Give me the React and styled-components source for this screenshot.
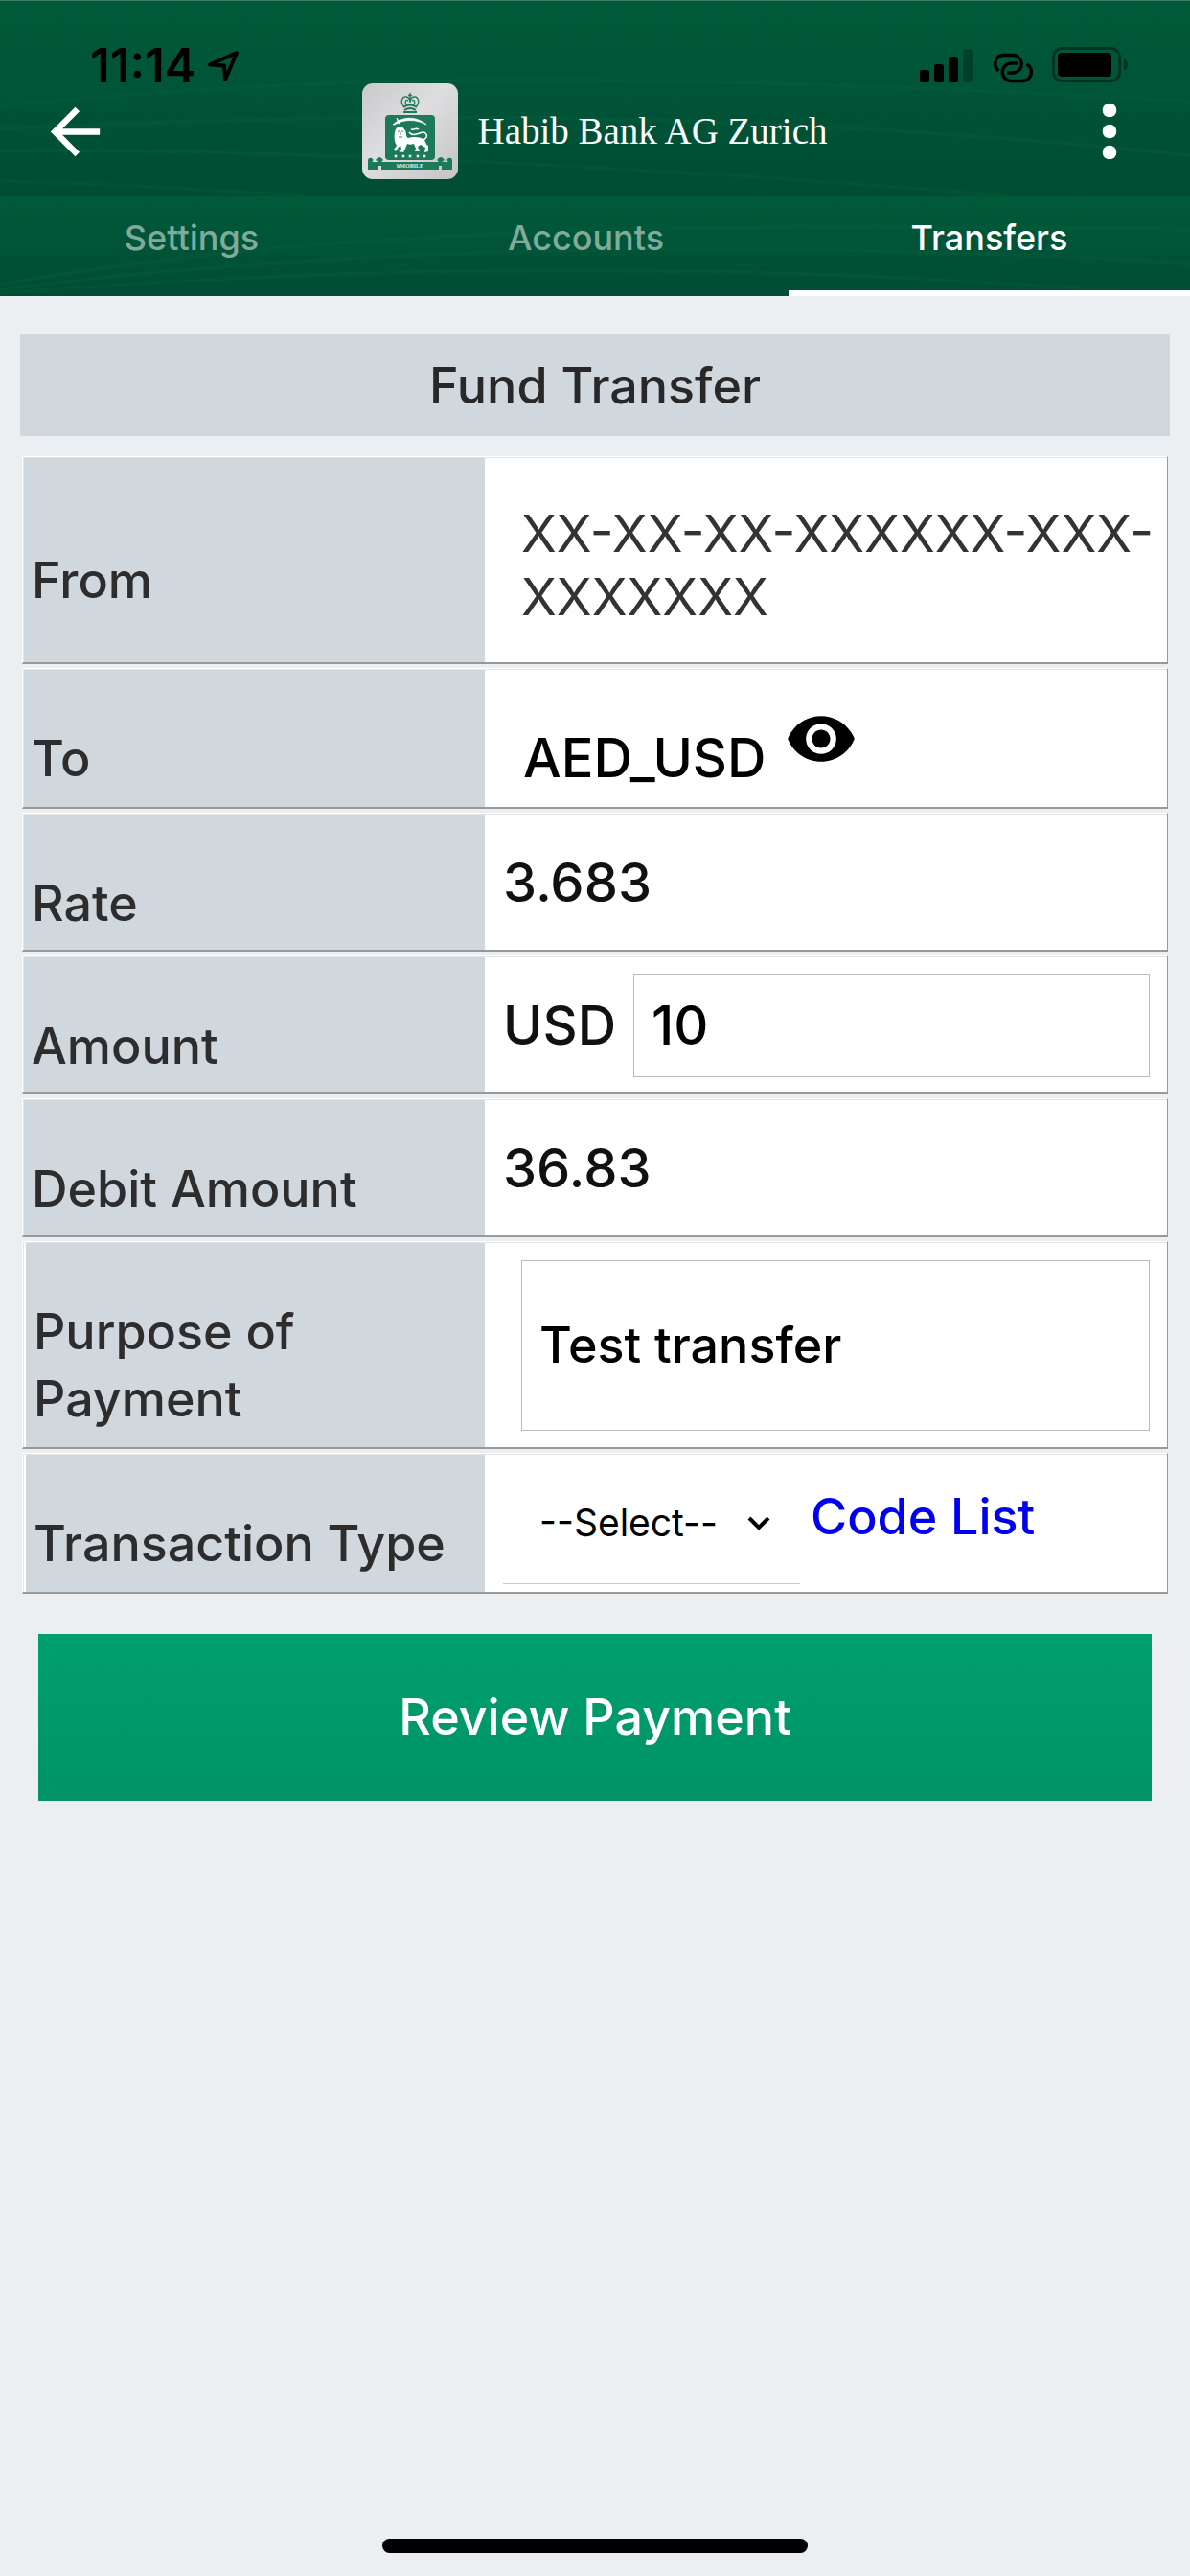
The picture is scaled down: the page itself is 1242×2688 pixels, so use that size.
import { useState } from 'react';
import styled, { createGlobalStyle } from 'styled-components';

const GlobalStyle = createGlobalStyle`
  * {
    box-sizing:border-box;
  }
  body {
    margin:0;
    background:#ebeff2;
    color:#2d2d2d;
    font-family:Inter, "Liberation Sans", sans-serif;
    font-size:52px;
    font-weight:500;
    line-height:70px;
  }
  button, input, select {
    margin:0;
    border:0;
    border-radius:0;
    background:none;
    color:inherit;
    font:inherit;
  }
  svg {
    display:block;
  }
`;

const Page = styled.div`
  display:flex;
  flex-direction:column;
  min-height:100vh;
`;

const Header = styled.header`
  position:relative;
  padding-bottom:17px;
  border-top:1px solid #3b7d63;
  background:linear-gradient(#005a3a, #004d33);
`;

const Waves = styled.svg`
  position:absolute;
  inset:0;
  width:100%;
  height:100%;
  fill:none;
  stroke:#0b6a47;
  stroke-opacity:.2;
  stroke-width:4;
`;

const StatusBar = styled.div`
  position:relative;
  display:flex;
  justify-content:space-between;
  align-items:flex-end;
  height:86px;
  padding:0 64px 0 94px;
  color:#000;
`;

const Clock = styled.div`
  display:flex;
  align-items:center;
  gap:12px;
  font-size:49px;
  font-weight:600;
  line-height:36px;
`;

const StatusIcons = styled.div`
  display:flex;
  align-items:flex-end;
  gap:20px;
`;

const AppBar = styled.div`
  position:relative;
  display:grid;
  grid-template-columns:1fr auto 1fr;
  align-items:center;
  padding:0 40px;
`;

const IconButton = styled.button`
  justify-self:${({ $end }) => ($end ? 'end' : 'start')};
  padding:0;
  color:#fff;
  cursor:pointer;
`;

const Brand = styled.div`
  display:flex;
  align-items:center;
  gap:20px;
  color:#fff;
  font-family:"Liberation Serif", serif;
  font-size:39px;
  font-weight:400;
  line-height:48px;
  white-space:nowrap;
`;

const Tabs = styled.nav`
  position:relative;
  display:grid;
  grid-template-columns:400fr 423fr 419fr;
  height:105px;
  border-top:1px solid #3b7d63;
  background:linear-gradient(#005a3a, #004d33);
`;

const Tab = styled.a`
  position:relative;
  padding-top:20px;
  border-bottom:6px solid ${({ $active }) => ($active ? '#fff' : 'transparent')};
  color:${({ $active }) => ($active ? '#fff' : '#80ab9c')};
  font-size:36px;
  line-height:46px;
  text-align:center;
  text-decoration:none;
`;

const Title = styled.h1`
  margin:40px 21px 21px;
  padding:19px 0 17px;
  background:#d0d8de;
  color:#282828;
  font-size:52px;
  font-weight:500;
  line-height:70px;
  text-align:center;
`;

const Form = styled.form`
  display:flex;
  flex-direction:column;
  gap:4px;
  padding:0 23px;
`;

const Row = styled.div`
  display:grid;
  grid-template-columns:minmax(0, 481fr) minmax(0, 712fr);
  padding:1px 0 0 1px;
  border:1px solid;
  border-width:1px 1px 2px 1px;
  border-color:#fff #999 #999 #fff;
  background:#fff;
  box-shadow:inset 1px 1px #e4e4e4;
`;

const Label = styled.label`
  display:flex;
  align-items:center;
  margin-left:${({ $inset }) => ($inset ? '2px' : '0')};
  padding:58px 8px ${({ $compact }) => ($compact ? '13px' : '15px')};
  background:#d0d8de;
`;

const Value = styled.div`
  display:flex;
  align-items:center;
  padding:0 18px 0 ${({ $inset }) => ($inset ? '38px' : '19px')};
  color:#111;
  font-size:56px;
`;

const Account = styled.output`
  padding:46px 0 35px;
  margin-right:-18px;
  color:#333;
  font-size:54px;
  font-weight:400;
  line-height:66px;
`;

const Beneficiary = styled.output`
  padding:40px 20px 0 2px;
  color:#000;
`;

const TextField = styled.input`
  flex:1;
  min-width:0;
  height:${({ $tall }) => ($tall ? '178px' : '108px')};
  padding:0 18px;
  border:1px solid #bbb;
  background:#fff;
  color:#000;
  font-size:${({ $tall }) => ($tall ? '52px' : '56px')};
  outline:0;
`;

const Currency = styled.span`
  margin-right:18px;
`;

const SelectBox = styled.div`
  display:grid;
  align-items:center;
  width:310px;
  margin-right:11px;
  border-bottom:1px solid #ccc;
  color:#000;
  > * {
    grid-area:1 / 1;
  }
  select {
    height:125px;
    padding:0 80px 0 38px;
    appearance:none;
    font-size:39px;
    font-weight:400;
    outline:0;
  }
  svg {
    justify-self:end;
    margin-right:30px;
    pointer-events:none;
  }
`;

const CodeLink = styled.a`
  padding-bottom:14px;
  color:#00e;
  font-size:52px;
  text-decoration:none;
`;

const SubmitButton = styled.button`
  height:174px;
  margin:38px 17px 0;
  background:linear-gradient(#00a06c, #009366);
  color:#fff;
  font-size:52px;
  cursor:pointer;
`;

const HomeIndicator = styled.div`
  width:444px;
  height:15px;
  margin:auto auto 24px;
  border-radius:8px;
  background:#000;
`;

const LocationIcon = () => (
  <svg width="34" height="34" viewBox="0 0 34 34" fill="none" stroke="#000" strokeWidth="4" strokeLinejoin="round" aria-hidden="true">
    <path d="M31 3 L3 15.500 L18 16.500 L19 31 Z" />
  </svg>
);

const SignalIcon = () => (
  <svg width="56" height="36" viewBox="0 0 56 36" aria-hidden="true">
    <rect x="0" y="22" width="10" height="13" rx="2.500" />
    <rect x="15" y="16" width="10" height="19" rx="2.500" />
    <rect x="30" y="8" width="10" height="27" rx="2.500" />
    <rect x="45" y="0" width="10" height="35" rx="2.500" opacity=".25" />
  </svg>
);

const HotspotIcon = () => (
  <svg width="42" height="32" viewBox="0 0 42 32" fill="none" stroke="#000" strokeWidth="3.400" aria-hidden="true">
    <path d="M6.500 19 A9.200 9.200 0 0 1 10.500 2.500 H22 A9.300 9.300 0 0 1 22 21 H15" />
    <path d="M26.500 11 H19.500 A9.200 9.200 0 0 0 19.500 29.500 H31 A9.300 9.300 0 0 0 35.500 12" />
  </svg>
);

const BatteryIcon = () => (
  <svg width="80" height="38" viewBox="0 0 80 38" aria-hidden="true">
    <rect x="1.500" y="1.500" width="69" height="34" rx="9" fill="none" stroke="#000" strokeWidth="3" opacity=".4" />
    <rect x="6" y="6" width="56" height="25" rx="4" />
    <path d="M75 12 Q79 15 79 19 Q79 22 75 25 Z" opacity=".4" />
  </svg>
);

const BackIcon = () => (
  <svg width="77" height="77" viewBox="0 0 24 24" fill="currentColor" aria-hidden="true">
    <path d="M20 11H7.830l5.590-5.590L12 4l-8 8 8 8 1.410-1.410L7.830 13H20v-2z" />
  </svg>
);

const MoreIcon = () => (
  <svg width="88" height="88" viewBox="0 0 24 24" fill="currentColor" aria-hidden="true">
    <circle cx="12" cy="6" r="2" />
    <circle cx="12" cy="12" r="2" />
    <circle cx="12" cy="18" r="2" />
  </svg>
);

const EyeIcon = () => (
  <svg width="76" height="76" viewBox="0 0 24 24" fill="#000" aria-hidden="true">
    <path d="M12 4.500C7 4.500 2.730 7.610 1 12c1.730 4.390 6 7.500 11 7.500s9.270-3.110 11-7.500c-1.730-4.390-6-7.500-11-7.500zM12 17c-2.760 0-5-2.240-5-5s2.240-5 5-5 5 2.240 5 5-2.240 5-5 5zm0-8c-1.660 0-3 1.340-3 3s1.340 3 3 3 3-1.340 3-3-1.340-3-3-3z" />
  </svg>
);

const ChevronIcon = () => (
  <svg width="26" height="18" viewBox="0 0 26 18" fill="none" stroke="#000" strokeWidth="4" aria-hidden="true">
    <path d="M3 4 L13 14 L23 4" />
  </svg>
);

const stars = [35, 43, 50, 58, 65];

const Crest = () => (
  <svg width="100" height="100" viewBox="0 0 100 100" role="img" aria-label="hMobile">
    <defs>
      <linearGradient id="steel" x1="0" y1="0" x2="1" y2="1">
        <stop offset="0" stopColor="#c9c9cb" />
        <stop offset=".45" stopColor="#dedee0" />
        <stop offset="1" stopColor="#c4c4c6" />
      </linearGradient>
    </defs>
    <rect width="100" height="100" rx="11" fill="url(#steel)" />
    <g fill="none" stroke="#1c7a58" strokeWidth="1.300">
      <path d="M50 10 V16 M48 12.500 H52" />
      <path d="M43.500 24 C39 19 42 13.500 46 14 C49 14.500 50 17 50 20 C50 17 51 14.500 54 14 C58 13.500 61 19 56.500 24" />
      <path d="M46 23 C44 19 46 16 48 18 M54 23 C56 19 54 16 52 18" />
      <path d="M43 25 Q50 20 57 25 M44 28 Q50 24 56 28 M43 30 H57" strokeWidth="1.800" />
    </g>
    <rect x="24" y="33" width="52" height="47" rx="4" fill="#1c7a58" />
    <path d="M32 43 C42 34 57 34 67 43 C57 37 43 37 34 43 Z M36 36 L40 41 L38 42 Z" fill="#fff" stroke="#fff" strokeWidth=".800" />
    <path d="M35 48 C37 44 42 44 44 48 C47 51 45 56 48 57 C54 55 60 56 64 58 C67 61 66 64 69 65 L69 71 L65 72 L66 67 L61 64 L58 66 L60 71 L55 71 L56 68 L54 63 C51 64 49 64 47 63 L45 68 L43 72 L38 71 L41 69 L40 64 L37 68 L35 71 L33 69 L36 65 C33 60 33 53 35 48 Z" fill="#fff" />
    <path d="M64 59 C71 55 66 49 60 52 C55 54 51 54 49 51 M51 48 C54 49 56 46 59 48" fill="none" stroke="#fff" strokeWidth="1.500" />
    <path d="M37 50 H39 M41 50 H43 M40 51 V54 M38 56 H42" stroke="#1c7a58" strokeWidth=".900" />
    {stars.map((x) => (
      <path key={x} d={`M${x} 74 l.600 1.300 1.400 .100 -1 .900 .300 1.400 -1.300 -.700 -1.300 .700 .300 -1.400 -1 -.900 1.400 -.100 Z`} fill="#fff" />
    ))}
    <g fill="#1c7a58">
      <path d="M6 81 Q6 77 10 78 Q13 80 10 82 H17 V90 H6 Z M94 81 Q94 77 90 78 Q87 80 90 82 H83 V90 H94 Z" />
      <path d="M14 80 Q18 74 22 80 L20 82 V86 H17 V82 Z M86 80 Q82 74 78 80 L80 82 V86 H83 V82 Z" />
      <rect x="20" y="82" width="60" height="8" />
    </g>
    <text x="50" y="88" fill="#e6efeb" fontFamily="Liberation Serif, serif" fontSize="6" fontWeight="700" textAnchor="middle">hMOBILE</text>
  </svg>
);

const App = () => {
  const [amount, setAmount] = useState('10');
  const [purpose, setPurpose] = useState('Test transfer');

  return (
    <Page>
      <GlobalStyle />
      <Header>
        <Waves viewBox="0 0 1242 204" preserveAspectRatio="none" aria-hidden="true">
          <path d="M0 110 C300 80 600 70 1242 105" />
          <path d="M0 134 C400 115 800 115 1242 162" />
          <path d="M0 157 C300 155 700 175 1050 204" />
          <path d="M0 189 C120 192 220 198 320 204" />
        </Waves>
        <StatusBar>
          <Clock>
            11:14
            <LocationIcon />
          </Clock>
          <StatusIcons>
            <SignalIcon />
            <HotspotIcon />
            <BatteryIcon />
          </StatusIcons>
        </StatusBar>
        <AppBar>
          <IconButton type="button" aria-label="Back"><BackIcon /></IconButton>
          <Brand>
            <Crest />
            Habib Bank AG Zurich
          </Brand>
          <IconButton type="button" aria-label="Menu" $end><MoreIcon /></IconButton>
        </AppBar>
      </Header>
      <Tabs>
        <Waves viewBox="0 0 1242 105" preserveAspectRatio="none" aria-hidden="true">
          <path d="M0 92 C180 65 400 20 1242 35" />
          <path d="M0 98 C300 60 700 40 1242 70" />
          <path d="M0 102 C400 70 800 70 1200 102" />
        </Waves>
        <Tab href="#settings">Settings</Tab>
        <Tab href="#accounts">Accounts</Tab>
        <Tab href="#transfers" $active aria-current="page">Transfers</Tab>
      </Tabs>

      <main>
        <Title>Fund Transfer</Title>
        <Form onSubmit={(e) => e.preventDefault()}>
          <Row>
            <Label htmlFor="from">From</Label>
            <Value $inset><Account id="from">XX-XX-XX-XXXXXX-XXX-XXXXXXX</Account></Value>
          </Row>
          <Row>
            <Label htmlFor="to">To</Label>
            <Value $inset>
              <Beneficiary id="to">AED_USD</Beneficiary>
              <IconButton type="button" aria-label="View details"><EyeIcon /></IconButton>
            </Value>
          </Row>
          <Row>
            <Label htmlFor="rate" $compact>Rate</Label>
            <Value><output id="rate">3.683</output></Value>
          </Row>
          <Row>
            <Label htmlFor="amount" $compact>Amount</Label>
            <Value>
              <Currency>USD</Currency>
              <TextField id="amount" inputMode="decimal" value={amount} onChange={(e) => setAmount(e.target.value)} />
            </Value>
          </Row>
          <Row>
            <Label htmlFor="debit" $compact>Debit Amount</Label>
            <Value><output id="debit">36.83</output></Value>
          </Row>
          <Row>
            <Label htmlFor="purpose" $inset>Purpose of Payment</Label>
            <Value $inset>
              <TextField id="purpose" $tall value={purpose} onChange={(e) => setPurpose(e.target.value)} />
            </Value>
          </Row>
          <Row>
            <Label htmlFor="type" $inset>Transaction Type</Label>
            <Value>
              <SelectBox>
                <select id="type" defaultValue="">
                  <option value="">--Select--</option>
                </select>
                <ChevronIcon />
              </SelectBox>
              <CodeLink href="#codes">Code List</CodeLink>
            </Value>
          </Row>
          <SubmitButton type="submit">Review Payment</SubmitButton>
        </Form>
      </main>
      <HomeIndicator />
    </Page>
  );
};

export default App;
